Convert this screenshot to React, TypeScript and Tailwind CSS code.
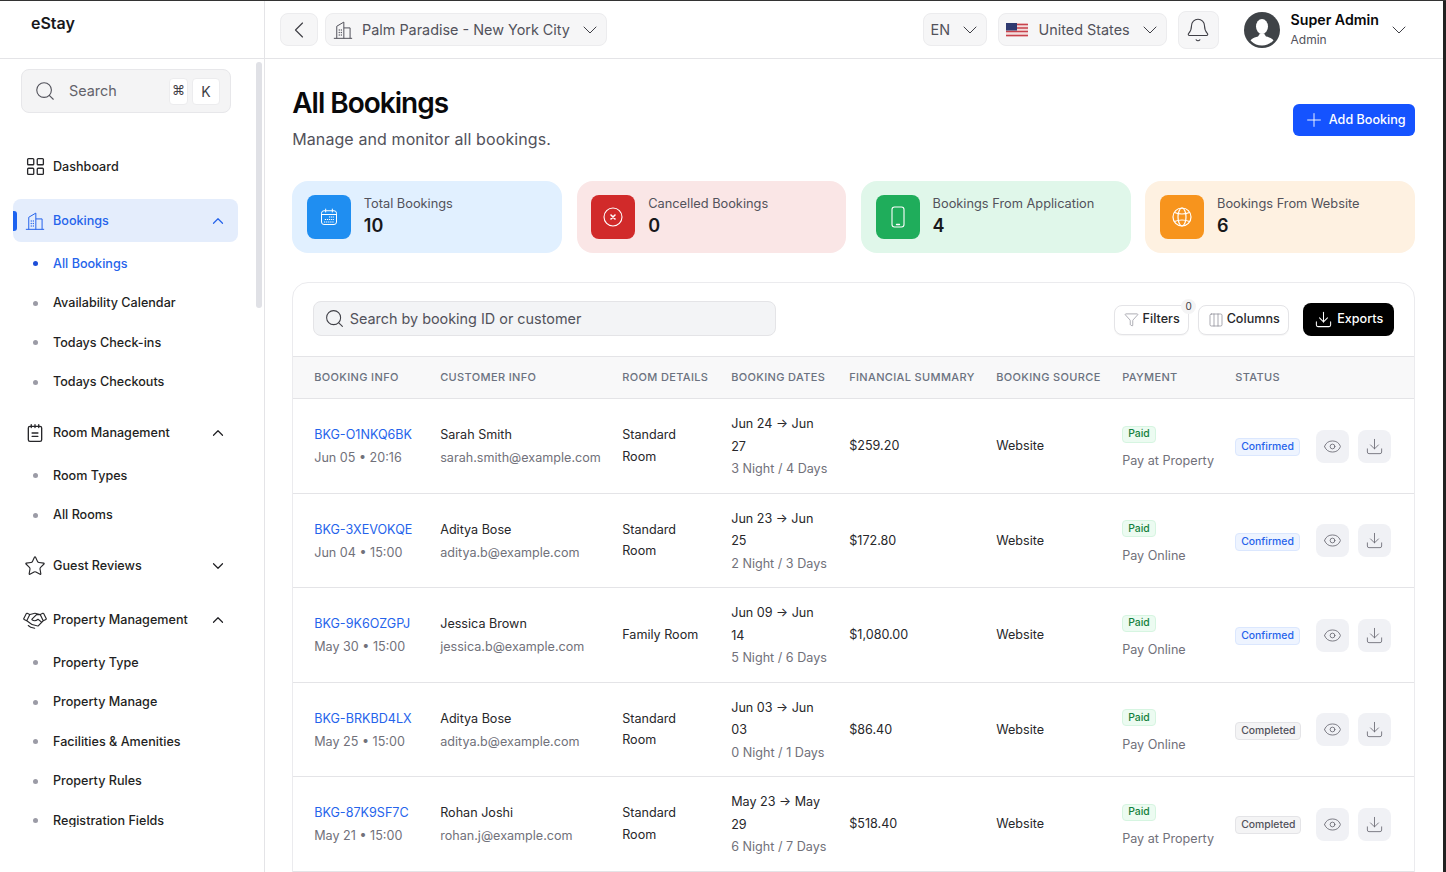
import {
  Bell,
  ChevronDown,
  ChevronLeft,
  ChevronUp,
  Columns3,
  Download,
  Eye,
  Funnel,
  LayoutGrid,
  Plus,
  Search,
  Star,
} from "lucide-react";
import { PiHandshakeLight } from "react-icons/pi";

type IconProps = { className?: string };

const BuildingIcon = ({ className }: IconProps) => (
  <svg viewBox="0 0 24 24" fill="none" stroke="currentColor" strokeWidth="1.2" className={className}>
    <path d="M1.5 22h21" strokeLinecap="round" />
    <path d="M4.5 22V7.5L13 2.5V22" strokeLinejoin="round" />
    <path d="M13 9.5h7.5V22" strokeLinejoin="round" />
    <path d="M7.5 12h.01M10 12h.01M7.5 15h.01M10 15h.01M7.5 18h.01M10 18h.01" strokeWidth="1.6" strokeLinecap="round" />
  </svg>
);

const NotepadIcon = ({ className }: IconProps) => (
  <svg viewBox="0 0 24 24" fill="none" stroke="currentColor" strokeWidth="1.6" className={className}>
    <rect x="4" y="4" width="16" height="18" rx="2" />
    <path d="M7.5 2v3.5M12 2v3.5M16.5 2v3.5" strokeLinecap="round" />
    <path d="M8.5 12h7M8.5 16h7" strokeLinecap="round" />
  </svg>
);

const CalendarIcon = ({ className }: IconProps) => (
  <svg viewBox="0 0 24 24" fill="none" stroke="currentColor" strokeWidth="1.2" className={className}>
    <rect x="3" y="4.5" width="18" height="16.5" rx="3" />
    <path d="M3 9h18M8 2.5v3.5M16 2.5v3.5" strokeLinecap="round" />
    <path d="M12 12h6M7 15h11M6 18h12" strokeDasharray="1.5 1" />
  </svg>
);

const CancelIcon = ({ className }: IconProps) => (
  <svg viewBox="0 0 24 24" fill="none" stroke="currentColor" strokeWidth="1.1" className={className}>
    <circle cx="12" cy="12" r="9" />
    <path d="M10 10l4 4M14 10l-4 4" strokeWidth="1.6" strokeLinecap="round" />
  </svg>
);

const PhoneIcon = ({ className }: IconProps) => (
  <svg viewBox="0 0 24 24" fill="none" stroke="currentColor" strokeWidth="1.1" className={className}>
    <rect x="6" y="2" width="12" height="20" rx="2.5" />
    <path d="M10.5 19.500h3" strokeLinecap="round" strokeWidth="1.3" />
  </svg>
);

const GlobeIcon = ({ className }: IconProps) => (
  <svg viewBox="0 0 24 24" fill="none" stroke="currentColor" strokeWidth="1.2" className={className}>
    <circle cx="12" cy="12" r="9" />
    <ellipse cx="12" cy="12" rx="4" ry="9" />
    <path d="M4.500 7.500Q12 10.500 19.500 7.500M4.500 16.500Q12 13.500 19.500 16.500" />
  </svg>
);

const AvatarIcon = () => (
  <svg viewBox="0 0 36 36" className="h-[36px] w-[36px]">
    <circle cx="18" cy="18" r="18" fill="#3f4347" />
    <clipPath id="avatar-clip">
      <circle cx="18" cy="18" r="15.5" />
    </clipPath>
    <g clipPath="url(#avatar-clip)" fill="#fff">
      <ellipse cx="18" cy="14.5" rx="6" ry="7.5" />
      <path d="M4 36c0-8 5-10.500 10-11.500l2-3h4l2 3c5 1 10 3.500 10 11.500z" />
    </g>
  </svg>
);

const UsFlag = () => (
  <svg viewBox="0 0 22 14" className="h-[14px] w-[22px]">
    <rect width="22" height="14" rx="1.500" fill="#f3dcdc" />
    <path d="M0 1.500h22M0 5h22M0 8.500h22M0 12.500h22" stroke="#c8424c" strokeWidth="1.300" />
    <rect width="11" height="7.500" fill="#2f3a70" />
  </svg>
);

const subItem = (label: string, active = false) => (
  <div key={label} className="flex h-[39.5px] items-center pl-[33px]">
    <span className={`h-[5px] w-[5px] rounded-full ${active ? "bg-[#1d4ed8]" : "bg-[#9b9ba6]"}`} />
    <span className={`ml-[15px] pt-[1px] text-[12.6px] font-medium ${active ? "text-[#2563eb]" : "text-[#1f1f23]"}`}>{label}</span>
  </div>
);

function Sidebar() {
  return (
    <aside className="flex w-[265px] shrink-0 flex-col border-r border-[#e4e4e7]">
      <div className="h-[58px] shrink-0 border-b border-[#e4e4e7] pl-[31px] pt-[11px] text-[16px] font-semibold leading-[22px] text-[#18181b]">
        eStay
      </div>
      <div className="relative h-[768px] overflow-hidden">
        {/* scrollbar */}
        <div className="absolute left-[256px] top-[3px] h-[246px] w-[6px] rounded-full bg-[#e0e1e6]" />
        <div className="mx-[21px] mt-[10px] flex h-[44px] w-[210px] items-center rounded-[8px] border border-[#e7e7ea] bg-[#f4f4f5] pl-[12px]">
          <Search className="h-[22px] w-[22px] text-[#52525b]" strokeWidth={1.2} />
          <span className="ml-[13px] text-[14.4px] text-[#63636b]">Search</span>
          <div className="ml-auto mr-[10px] flex gap-[4px]">
            <span className="flex h-[27px] w-[19px] items-center justify-center rounded-[4px] border border-[#ececee] bg-white text-[13px] text-[#3f3f46]">⌘</span>
            <span className="flex h-[27px] w-[28px] items-center justify-center rounded-[4px] border border-[#ececee] bg-white text-[14px] text-[#3f3f46]">K</span>
          </div>
        </div>

        <nav className="mt-[32px] flex flex-col gap-[9px] pl-[13px]">
          <div className="mb-[2px] flex h-[43px] w-[225px] items-center pl-[11.5px] text-[12.6px] font-medium text-[#1f1f23]">
            <LayoutGrid className="h-[21px] w-[21px] text-[#27272a]" strokeWidth={1.5} />
            <span className="ml-[7.5px] pt-[1.5px]">Dashboard</span>
          </div>

          <div className="w-[225px]">
            <div className="relative flex h-[43px] items-center rounded-[8px] bg-[#e4edfc] pl-[12px] pr-[11px] text-[12.6px] font-medium text-[#2563eb]">
              <span className="absolute left-0 top-[12px] h-[20px] w-[4px] rounded-r-[3px] bg-[#1d63f0]" />
              <BuildingIcon className="h-[20px] w-[20px]" />
              <span className="ml-[8px] pt-[1.5px]">Bookings</span>
              <ChevronUp className="ml-auto h-[18px] w-[18px]" strokeWidth={1.6} />
            </div>
            <div className="-ml-[13px] mt-[2px]">
              {subItem("All Bookings", true)}
              {subItem("Availability Calendar")}
              {subItem("Todays Check-ins")}
              {subItem("Todays Checkouts")}
            </div>
          </div>

          <div className="w-[225px]">
            <div className="flex h-[43px] items-center pl-[12px] pr-[11px] text-[12.6px] font-medium text-[#1f1f23]">
              <NotepadIcon className="h-[20px] w-[20px] text-[#27272a]" />
              <span className="ml-[8px] pt-[1.5px]">Room Management</span>
              <ChevronUp className="ml-auto h-[18px] w-[18px]" strokeWidth={1.6} />
            </div>
            <div className="-ml-[13px] mt-[2px]">
              {subItem("Room Types")}
              {subItem("All Rooms")}
            </div>
          </div>

          <div className="flex h-[43px] w-[225px] items-center pl-[11px] pr-[11px] text-[12.6px] font-medium text-[#1f1f23]">
            <Star className="h-[22px] w-[22px] text-[#27272a]" strokeWidth={1.25} />
            <span className="ml-[7px] pt-[1.5px]">Guest Reviews</span>
            <ChevronDown className="ml-auto h-[18px] w-[18px]" strokeWidth={1.6} />
          </div>

          <div className="mt-[2px] w-[225px]">
            <div className="flex h-[43px] items-center pl-[10px] pr-[11px] text-[12.6px] font-medium text-[#1f1f23]">
              <PiHandshakeLight className="h-[24px] w-[24px] text-[#27272a]" />
              <span className="ml-[6px] pt-[1.5px]">Property Management</span>
              <ChevronUp className="ml-auto h-[18px] w-[18px]" strokeWidth={1.6} />
            </div>
            <div className="-ml-[13px] mt-[2px]">
              {subItem("Property Type")}
              {subItem("Property Manage")}
              {subItem("Facilities & Amenities")}
              {subItem("Property Rules")}
              {subItem("Registration Fields")}
            </div>
          </div>
        </nav>
      </div>
    </aside>
  );
}

function Topbar() {
  return (
    <header className="flex h-[58px] shrink-0 items-center border-b border-[#e4e4e7] pl-[15px] pr-[32.5px]">
      <button className="flex h-[33px] w-[38px] items-center justify-center rounded-[8px] border border-[#ececee] bg-[#f6f6f7] text-[#3f3f46]">
        <ChevronLeft className="h-[28px] w-[28px]" strokeWidth={1} />
      </button>
      <button className="ml-[7px] flex h-[33px] w-[282px] items-center rounded-[8px] border border-[#ececee] bg-[#f6f6f7] pl-[7px] text-[14.4px] text-[#52525b]">
        <BuildingIcon className="h-[20px] w-[20px]" />
        <span className="ml-[9px]">Palm Paradise - New York City</span>
        <ChevronDown className="ml-auto mr-[4px] h-[24px] w-[24px] text-[#3f3f46]" strokeWidth={1} />
      </button>

      <button className="ml-auto flex h-[33px] w-[64px] items-center rounded-[8px] border border-[#ececee] bg-[#f6f6f7] pl-[7px] text-[14.4px] text-[#52525b]">
        EN
        <ChevronDown className="ml-auto mr-[4px] h-[24px] w-[24px] text-[#3f3f46]" strokeWidth={1} />
      </button>
      <button className="ml-[11px] flex h-[33px] w-[169px] items-center rounded-[8px] border border-[#ececee] bg-[#f6f6f7] pl-[7px] text-[14.4px] text-[#52525b]">
        <UsFlag />
        <span className="ml-[11px]">United States</span>
        <ChevronDown className="ml-auto mr-[4px] h-[24px] w-[24px] text-[#3f3f46]" strokeWidth={1} />
      </button>
      <button className="ml-[11px] flex h-[38px] w-[41px] items-center justify-center rounded-[8px] border border-[#ececee] bg-[#f6f6f7] text-[#3f3f46]">
        <Bell className="h-[26px] w-[26px]" strokeWidth={1} />
      </button>

      <div className="ml-[25px]">
        <AvatarIcon />
      </div>
      <div className="ml-[11px] flex flex-col">
        <span className="text-[14.2px] font-semibold leading-[20px] text-[#09090b]">Super Admin</span>
        <span className="mt-[1px] text-[12px] leading-[18px] text-[#52525b]">Admin</span>
      </div>
      <ChevronDown className="ml-[7.5px] h-[24px] w-[24px] text-[#3f3f46]" strokeWidth={1} />
    </header>
  );
}

const stats = [
  { label: "Total Bookings", value: "10", card: "bg-[#e1f0ff]", tile: "bg-[#1f8ef1]", icon: <CalendarIcon className="h-[20px] w-[20px]" /> },
  { label: "Cancelled Bookings", value: "0", card: "bg-[#fae6e6]", tile: "bg-[#d12a2a]", icon: <CancelIcon className="h-[24px] w-[24px]" /> },
  { label: "Bookings From Application", value: "4", card: "bg-[#e0f7ea]", tile: "bg-[#1fad5b]", icon: <PhoneIcon className="h-[24px] w-[24px]" /> },
  { label: "Bookings From Website", value: "6", card: "bg-[#fef1e1]", tile: "bg-[#f7941d]", icon: <GlobeIcon className="h-[24px] w-[24px]" /> },
];

type Booking = {
  id: string;
  when: string;
  name: string;
  email: string;
  room: string;
  dates: string;
  nights: string;
  total: string;
  pay: string;
  status: "Confirmed" | "Completed";
};

const bookings: Booking[] = [
  { id: "BKG-O1NKQ6BK", when: "Jun 05 • 20:16", name: "Sarah Smith", email: "sarah.smith@example.com", room: "Standard Room", dates: "Jun 24 → Jun 27", nights: "3 Night / 4 Days", total: "$259.20", pay: "Pay at Property", status: "Confirmed" },
  { id: "BKG-3XEVOKQE", when: "Jun 04 • 15:00", name: "Aditya Bose", email: "aditya.b@example.com", room: "Standard Room", dates: "Jun 23 → Jun 25", nights: "2 Night / 3 Days", total: "$172.80", pay: "Pay Online", status: "Confirmed" },
  { id: "BKG-9K6OZGPJ", when: "May 30 • 15:00", name: "Jessica Brown", email: "jessica.b@example.com", room: "Family Room", dates: "Jun 09 → Jun 14", nights: "5 Night / 6 Days", total: "$1,080.00", pay: "Pay Online", status: "Confirmed" },
  { id: "BKG-BRKBD4LX", when: "May 25 • 15:00", name: "Aditya Bose", email: "aditya.b@example.com", room: "Standard Room", dates: "Jun 03 → Jun 03", nights: "0 Night / 1 Days", total: "$86.40", pay: "Pay Online", status: "Completed" },
  { id: "BKG-87K9SF7C", when: "May 21 • 15:00", name: "Rohan Joshi", email: "rohan.j@example.com", room: "Standard Room", dates: "May 23 → May 29", nights: "6 Night / 7 Days", total: "$518.40", pay: "Pay at Property", status: "Completed" },
];

const columns = ["Booking Info", "Customer Info", "Room Details", "Booking Dates", "Financial Summary", "Booking Source", "Payment", "Status", ""];

function BookingsTable() {
  return (
    <div className="mt-[29px] rounded-t-[16px] border border-[#ebebee]">
      <div className="flex h-[73px] items-center pb-[2px] pl-[20px] pr-[20px]">
        <div className="flex h-[35px] w-[463px] items-center rounded-[8px] border border-[#e4e4e7] bg-[#f3f4f6] pl-[10px] text-[14.4px] text-[#52525b]">
          <Search className="h-[21px] w-[21px] text-[#3f3f46]" strokeWidth={1.2} />
          <span className="ml-[4.5px]">Search by booking ID or customer</span>
        </div>
        <button className="relative ml-auto mt-[2px] flex h-[30px] w-[75px] items-center justify-center gap-[4px] rounded-[8px] border border-[#e4e4e7] bg-white text-[12.6px] font-medium text-[#27272a] shadow-[0_1px_1px_rgba(0,0,0,0.04)]">
          <Funnel className="h-[15px] w-[15px] text-[#8b8b94]" strokeWidth={1.1} />
          Filters
          <span className="absolute -right-[8px] -top-[7px] flex h-[15px] w-[15px] items-center justify-center rounded-full bg-[#f4f4f5] text-[10px] font-normal text-[#3f3f46]">0</span>
        </button>
        <button className="ml-[9px] mt-[2px] flex h-[30px] w-[91px] items-center justify-center gap-[3px] rounded-[8px] border border-[#e4e4e7] bg-white text-[12.6px] font-medium text-[#27272a] shadow-[0_1px_1px_rgba(0,0,0,0.04)]">
          <Columns3 className="h-[16px] w-[16px] text-[#8b8b94]" strokeWidth={1.1} />
          Columns
        </button>
        <button className="ml-[14px] mt-[1px] flex h-[33px] w-[91px] items-center justify-center gap-[4px] rounded-[8px] bg-black text-[12.6px] font-medium text-white">
          <Download className="h-[19px] w-[19px]" strokeWidth={1.3} />
          Exports
        </button>
      </div>

      <table className="w-[1121px] table-fixed border-collapse text-left">
        <colgroup>
          <col className="w-[147px]" />
          <col className="w-[182px]" />
          <col className="w-[109px]" />
          <col className="w-[118px]" />
          <col className="w-[147px]" />
          <col className="w-[126px]" />
          <col className="w-[113px]" />
          <col className="w-[81px]" />
          <col className="w-[98px]" />
        </colgroup>
        <thead>
          <tr className="h-[42px] border-y border-[#e4e4e7] bg-[#f8f8f9]">
            {columns.map((c, i) => (
              <th
                key={c || i}
                className={`whitespace-nowrap text-[11px] font-medium uppercase tracking-[0.35px] text-[#6b7280] ${i === 0 ? "pl-[21px]" : ""}`}
              >
                {c}
              </th>
            ))}
          </tr>
        </thead>
        <tbody>
          {bookings.map((b) => (
            <tr key={b.id} className="h-[94.5px] border-b border-[#e4e4e7] text-[12.6px] text-[#27272a]">
              <td className="pl-[21px] pt-[1px]">
                <div className="leading-[23px] text-[#2563eb]">{b.id}</div>
                <div className="leading-[23px] text-[#71717a]">{b.when}</div>
              </td>
              <td className="pt-[1px]">
                <div className="leading-[23px]">{b.name}</div>
                <div className="leading-[23px] text-[#71717a]">{b.email}</div>
              </td>
              <td className="pr-[24px] leading-[21.500px]">{b.room}</td>
              <td className="pt-[2px]">
                <div className="w-[92px] leading-[22.500px]">{b.dates}</div>
                <div className="whitespace-nowrap leading-[22.500px] text-[#71717a]">{b.nights}</div>
              </td>
              <td className="pt-[2px]">{b.total}</td>
              <td className="pt-[2px]">Website</td>
              <td className="pt-[4px]">
                <span className="inline-flex h-[17px] items-center rounded-[4px] border border-[#d6f5e1] bg-[#ecfbf1] px-[5px] text-[10.4px] font-medium text-[#15803d]">Paid</span>
                <div className="mt-[8px] leading-[20px] text-[#71717a]">{b.pay}</div>
              </td>
              <td className="pt-[2px]">
                <span
                  className={`inline-flex h-[18px] items-center rounded-[4px] border px-[5px] text-[10.4px] font-medium ${
                    b.status === "Confirmed" ? "border-[#dbe7fe] bg-[#eef4ff] text-[#2563eb]" : "border-[#e4e4e7] bg-[#f4f4f5] text-[#52525b]"
                  }`}
                >
                  {b.status}
                </span>
              </td>
              <td className="pt-[1px]">
                <div className="flex gap-[9px]">
                  <button className="flex h-[33px] w-[33px] items-center justify-center rounded-[8px] bg-[#f0f1f5] text-[#6b6b75]">
                    <Eye className="h-[19px] w-[19px]" strokeWidth={1.1} />
                  </button>
                  <button className="flex h-[33px] w-[33px] items-center justify-center rounded-[8px] bg-[#f0f1f5] text-[#6b6b75]">
                    <Download className="h-[19px] w-[19px]" strokeWidth={1.1} />
                  </button>
                </div>
              </td>
            </tr>
          ))}
        </tbody>
      </table>
    </div>
  );
}

export default function App() {
  return (
    <div className="flex h-[872px] w-[1446px] overflow-hidden border-t border-[#333] bg-white font-['Inter',sans-serif] antialiased">
      <Sidebar />
      <div className="flex w-[1178px] flex-col">
        <Topbar />
        <main className="overflow-hidden pl-[27.2px] pr-[27.8px]">
          <div className="flex items-start pt-[25px]">
            <div>
              <h1 className="text-[28px] font-semibold leading-[38px] tracking-[-1px] text-[#09090b]">All Bookings</h1>
              <p className="mt-[5px] text-[16px] leading-[24px] tracking-[0.1px] text-[#52525b]">Manage and monitor all bookings.</p>
            </div>
            <button className="ml-auto mt-[20px] flex h-[32px] w-[122px] items-center justify-center gap-[4px] rounded-[6px] bg-[#1553ff] text-[12.6px] font-medium text-white">
              <Plus className="h-[22px] w-[22px]" strokeWidth={1} />
              Add Booking
            </button>
          </div>

          <div className="mt-[30px] grid grid-cols-4 gap-[14.67px]">
            {stats.map((s) => (
              <div key={s.label} className={`flex h-[72px] items-center rounded-[16px] pl-[14.6px] ${s.card}`}>
                <div className={`flex h-[44px] w-[44px] items-center justify-center rounded-[8px] text-white ${s.tile}`}>{s.icon}</div>
                <div className="ml-[13px] pb-[1px]">
                  <div className="text-[12.8px] leading-[18px] text-[#52525b]">{s.label}</div>
                  <div className="mt-[1px] text-[18px] font-semibold leading-[24px] text-[#18181b]">{s.value}</div>
                </div>
              </div>
            ))}
          </div>

          <BookingsTable />
        </main>
      </div>
      <div className="w-[3px] shrink-0 bg-[#222]" />
    </div>
  );
}
